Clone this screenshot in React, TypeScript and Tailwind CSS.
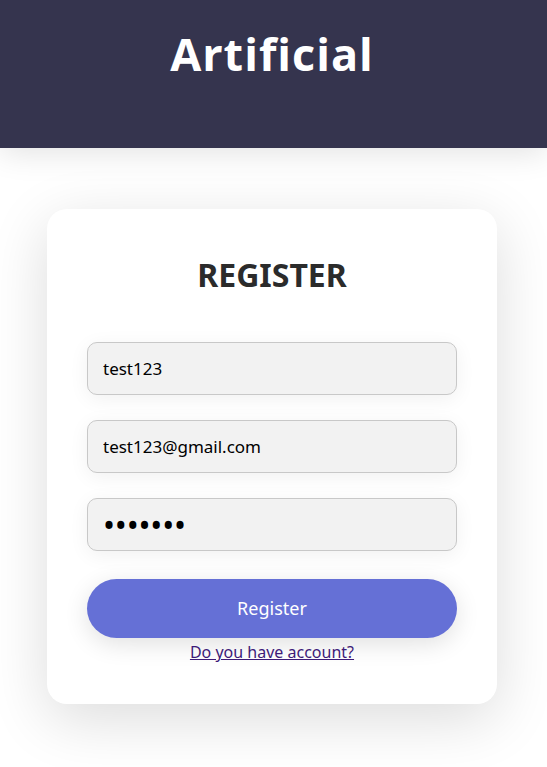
import React from "react";

export default function App() {
  return (
    <div className="min-h-[767px] w-full bg-white font-['Noto_Sans',sans-serif]">
      <header className="relative z-10 flex h-[148px] justify-center bg-[#35344e] pt-[22px] pr-[3px] shadow-[0_4px_30px_rgba(0,0,0,0.12)]">
        <h1 className="text-[45px] font-bold leading-[64px] tracking-[1px] text-white font-['Open_Sans',sans-serif]">
          Artificial
        </h1>
      </header>
      <main className="flex justify-center pt-[61px] pr-[3px]">
        <div className="flex w-[450px] flex-col items-center rounded-[20px] bg-white px-[40px] pt-[46px] pb-[40px] shadow-[0_15px_60px_rgba(0,0,0,0.14)]">
          <h2 className="text-[32px] font-bold leading-[40px] text-[#2b2b2b]">REGISTER</h2>
          <div className="mt-[47px] flex w-full flex-col gap-[25px]">
            <input
              readOnly
              value="test123"
              className="h-[53px] w-full rounded-[10px] border border-[#c8c8c8] bg-[#f2f2f2] px-[15px] text-[17px] text-black shadow-[0_4px_20px_rgba(0,0,0,0.06)] outline-none"
            />
            <input
              readOnly
              value="test123@gmail.com"
              className="h-[53px] w-full rounded-[10px] border border-[#c8c8c8] bg-[#f2f2f2] px-[15px] text-[17px] text-black shadow-[0_4px_20px_rgba(0,0,0,0.06)] outline-none"
            />
            <input
              readOnly
              type="password"
              value="1234567"
              className="h-[53px] w-full rounded-[10px] border border-[#c8c8c8] bg-[#f2f2f2] px-[15px] text-[32px] tracking-[-0.2px] text-black shadow-[0_4px_20px_rgba(0,0,0,0.06)] outline-none"
            />
          </div>
          <button className="mt-[28px] h-[59px] w-full rounded-full bg-[#6570d6] text-[18px] text-white shadow-[0_6px_24px_rgba(0,0,0,0.12)]">
            Register
          </button>
          <a href="#" className="mt-[2px] text-[16px] leading-[24px] text-[#3d1a78] underline">
            Do you have account?
          </a>
        </div>
      </main>
    </div>
  );
}
